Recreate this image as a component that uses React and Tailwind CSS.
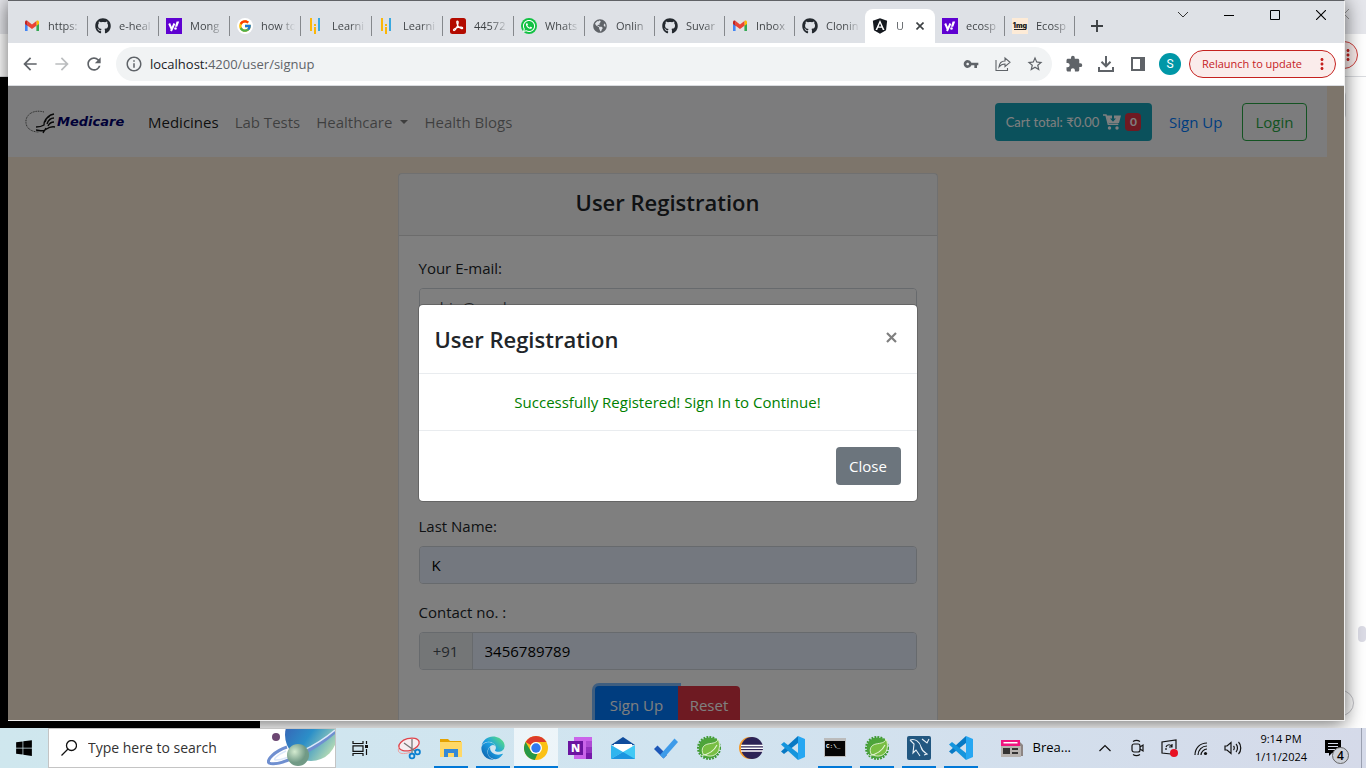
import React from 'react';
import { FaGithub, FaWhatsapp, FaAngular, FaWindows, FaEdge, FaGlobeAmericas } from 'react-icons/fa';
import { FcGoogle } from 'react-icons/fc';
import { MdVpnKey, MdStarBorder, MdExtension, MdArrowBack, MdArrowForward, MdRefresh, MdInfoOutline, MdMoreVert } from 'react-icons/md';

const UI = "font-['Open_Sans','Noto_Sans',sans-serif]";

function Gmail() {
  return (
    <svg className="size-4" viewBox="0 0 16 16">
      <path d="M1 4.5V13h2.6V7z" fill="#4285f4" />
      <path d="M15 4.5V13h-2.6V7z" fill="#34a853" />
      <path d="M12.4 3.6V8L15 6V4c0-1.400-1.500-2-2.600-1z" fill="#fbbc04" />
      <path d="M3.600 3L8 6.400 12.400 3v4.800L8 11 3.600 7.800z" fill="#ea4335" />
      <path d="M1 4v2l2.600 2V3C2.500 2 1 2.600 1 4z" fill="#c5221f" />
    </svg>
  );
}
function Yahoo() {
  return (
    <svg className="size-4" viewBox="0 0 16 16">
      <path d="M0 0h16v16H0z" fill="#5f01d1" />
      <path d="M3.200 5.500l2.200 5.200M8.400 5.500L5 13" stroke="#fff" strokeWidth="2" fill="none" />
      <path d="M10.600 3.500h2.600l-2 5.200H9z" fill="#fff" />
      <circle cx="9.500" cy="10.500" r="1.300" fill="#fff" />
    </svg>
  );
}
function Bars() {
  return (
    <svg className="size-4" viewBox="0 0 16 16">
      <path d="M2 0h2v13H2zM6 6h2v2H6zM6 9h2v7H6z" fill="#fbb709" />
      <path d="M10 0h2v13h-2z" fill="#38a8e0" />
    </svg>
  );
}
function Acrobat() {
  return (
    <svg className="size-4" viewBox="0 0 16 16">
      <rect width="16" height="16" rx="2.500" fill="#b30b00" />
      <path d="M7.300 3c1.500 0 .8 2.800 0 5-.8 2-2.300 4.800-3.500 4.500C2.600 12 5 9.800 8 9.300c2.200-.4 4.700-.2 4.700.8 0 1.200-2.600.3-4.200-1.400C7 7 6.200 3 7.300 3z" fill="none" stroke="#fff" strokeWidth="1.200" />
    </svg>
  );
}
function OneMg() {
  return (
    <svg className="size-4" viewBox="0 0 16 16">
      <path d="M0 0h16v16H0z" fill="#fdebd7" />
      <text x="8" y="9.500" textAnchor="middle" fontSize="7" fontWeight="900" fontFamily="Inter" fill="#222">1mg</text>
      <path d="M2 11.500h12" stroke="#222" />
    </svg>
  );
}
const github = <FaGithub className="size-4 text-[#24292f]" />;

const tabs = [
  ['https:', <Gmail />], ['e-heal', github], ['Mong', <Yahoo />],
  ['how to', <span className="flex size-4 items-center justify-center rounded-full bg-white"><FcGoogle className="size-3.5" /></span>],
  ['Learni', <Bars />], ['Learni', <Bars />], ['44572', <Acrobat />],
  ['Whats', <span className="flex size-4 items-center justify-center rounded-full bg-[#12c143] text-white"><FaWhatsapp className="size-3.5" /></span>],
  ['Onlin', <FaGlobeAmericas className="size-3.5 text-[#5f6368]" />],
  ['Suvar', github], ['Inbox', <Gmail />], ['Clonin', github],
  ['U', <FaAngular className="size-4 scale-110 text-[#15191f]" />],
  ['ecosp', <Yahoo />], ['Ecosp', <OneMg />],
];

function Tab({ label, icon, index }) {
  const active = index === 12;
  return (
    <div className={`relative flex h-[34px] shrink-0 items-center pl-[7px] ${index < 8 ? 'w-[71px]' : 'w-[70px]'} ${active ? 'rounded-t-lg bg-white' : ''}`}>
      <span className="flex size-4 shrink-0 items-center justify-center">{icon}</span>
      <button className={`ml-2 overflow-hidden bg-clip-text text-left text-[11px] leading-4 whitespace-nowrap text-transparent ${active ? 'w-4 bg-[#5a5e62] text-xs' : 'w-9 bg-linear-to-r from-[#3c4043] from-50% to-transparent to-95%'}`}>{label}</button>
      {active ? (
        <button aria-label="Close tab" className="flex size-4 items-center justify-center">
          <svg className="size-2" viewBox="0 0 8 8"><path d="M.5.5l7 7m0-7l-7 7" stroke="#3c4043" strokeWidth="1.600" /></svg>
        </button>
      ) : index !== 11 && <span className="absolute right-0 h-5 w-px bg-[#85888c]" />}
    </div>
  );
}

function TabStrip() {
  return (
    <div className="flex h-[42px] shrink-0 bg-[#dee1e6] pl-[9px]">
      <div className="flex flex-1 items-end overflow-hidden">
        {tabs.map(([label, icon], i) => <Tab key={i} label={label} icon={icon} index={i} />)}
        <button aria-label="New tab" className="flex h-[34px] w-11 shrink-0 items-center justify-center">
          <svg className="size-3" viewBox="0 0 12 12"><path d="M6 0v12M0 6h12" stroke="#3c4043" strokeWidth="1.900" /></svg>
        </button>
      </div>
      <div className="flex h-7 shrink-0">
        <button aria-label="Search tabs" className="flex w-[46px] items-center justify-center"><svg className="h-2 w-3" viewBox="0 0 12 8"><path d="M1 1l5 5 5-5" fill="none" stroke="#333" /></svg></button>
        <button aria-label="Minimize" className="flex w-[46px] items-center justify-center"><svg className="size-2.5" viewBox="0 0 10 10"><path d="M0 5.500h10" stroke="#000" /></svg></button>
        <button aria-label="Maximize" className="flex w-[46px] items-center justify-center"><svg className="size-2.5" viewBox="0 0 10 10"><path d="M.5.5h9v9h-9z" fill="none" stroke="#000" /></svg></button>
        <button aria-label="Close window" className="flex w-[46px] items-center justify-center"><svg className="size-2.5" viewBox="0 0 10 10"><path d="M0 0l10 10M10 0L0 10" stroke="#000" strokeWidth="1.100" /></svg></button>
      </div>
    </div>
  );
}

function Toolbar() {
  return (
    <div className="flex h-[43px] shrink-0 items-center border-b border-[#dadce0] bg-white pr-2 pl-3 text-[#5f6368]">
      <button aria-label="Back" className="w-8"><MdArrowBack className="size-5" /></button>
      <button aria-label="Forward" className="w-8 text-[#bbbdbf]"><MdArrowForward className="size-5" /></button>
      <button aria-label="Reload" className="w-8"><MdRefresh className="size-5" /></button>
      <div className="flex h-[34px] flex-1 items-center rounded-full bg-[#f1f3f4] pr-px pl-[9px]">
        <MdInfoOutline className="size-[18px]" />
        <a href="#signup" className="ml-[7px] flex-1 text-[13px] leading-5"><span className="text-[#202124]">localhost:</span>4200/user/signup</a>
        <button aria-label="Passwords" className="flex w-8 justify-center"><MdVpnKey className="size-4" /></button>
        <button aria-label="Share" className="flex w-8 justify-center">
          <svg className="size-4" viewBox="0 0 16 16" fill="none" stroke="currentColor" strokeWidth="1.100"><path d="M1 4v10.500h11.500V12" /><path d="M4 11c.4-4 2.600-6 6-6V2l5 4.300-5 4.200V8C7.300 8 5.500 9 4 11z" /></svg>
        </button>
        <button aria-label="Bookmark" className="flex w-8 justify-center"><MdStarBorder className="size-[18px]" /></button>
      </div>
      <div className="flex items-center pl-1.5">
        <button aria-label="Extensions" className="flex w-8 justify-center"><MdExtension className="size-[18px]" /></button>
        <button aria-label="Downloads" className="flex w-8 justify-center">
          <svg className="size-4" viewBox="0 0 16 16" fill="none" stroke="currentColor" strokeWidth="2"><path d="M8 0v10M3.500 5.800L8 10.300l4.500-4.500M1 11v4h14v-4" /></svg>
        </button>
        <button aria-label="Side panel" className="flex w-8 justify-center">
          <svg className="size-3.5" viewBox="0 0 14 14"><path d="M1 1h12v12H1z" fill="none" stroke="currentColor" strokeWidth="2" /><path d="M9 1h4v12H9z" fill="currentColor" /></svg>
        </button>
        <button className="mx-[5px] size-[22px] rounded-full bg-[#0097a7] font-[Roboto,sans-serif] text-xs text-white">S</button>
        <button className="ml-[3px] flex h-7 items-center rounded-full border border-[#c5221f] bg-[#faeceb] pr-1 pl-3 text-[11px] leading-4 whitespace-nowrap text-[#c5221f]">
          <span className="w-[111px] text-left">Relaunch to update</span><MdMoreVert className="size-[18px]" />
        </button>
      </div>
    </div>
  );
}

function Navbar() {
  return (
    <nav className="flex min-h-[71px] items-center bg-[#f8f9fa] pr-5 pl-[17px] text-[15px] leading-6 text-black/50">
      <a href="#home" className="mr-[23px] flex w-[100px] shrink-0 items-center">
        <svg className="h-6 w-8 shrink-0" viewBox="0 0 32 24" fill="none">
          <path d="M19 2C8-1 0 5 1 13c.5 5 5 9 13 9" stroke="#555" strokeDasharray="1 .7" />
          <path d="M29 4c-5 1-8 4-9 8M29 8c-4 0-6 3-7 6M29 12c-4 0-5 2-6 4M25 6c-4 2-6 5-6 9-3 2-5 2-8 2M30 17c-5-1-7 1-10 3-3 2-6 0-9 0M21 18l-3 5" stroke="#111" strokeWidth="1.400" />
        </svg>
        <span className="font-['DejaVu_Sans'] text-[13px] leading-5 font-bold text-[#00006e] italic">Medicare</span>
      </a>
      <div className="flex gap-4 whitespace-nowrap">
        <a href="#medicines" className="text-black/90">Medicines</a>
        <a href="#labs">Lab Tests</a>
        <a href="#healthcare" className="flex items-center gap-2">Healthcare<svg className="h-1 w-2" viewBox="0 0 8 4"><path d="M0 0h8L4 4z" fill="currentColor" /></svg></a>
        <a href="#blogs">Health Blogs</a>
      </div>
      <button className="ml-auto flex h-[38px] w-[157px] items-center justify-center gap-1 rounded bg-[#17a2b8] font-[Lato,sans-serif] text-[13px] whitespace-nowrap text-white">
        Cart total: ₹0.00
        <svg className="h-4 w-[18px]" viewBox="0 0 18 16"><path d="M0 1h3l2.300 9.300h10" fill="none" stroke="#fff" strokeWidth="1.500" /><path d="M3.500 1.500H9v3H7l3 3.200 3-3.200h-2v-3h7l-2 7.500H5.300z" fill="#fff" /><circle cx="6.500" cy="14" r="1.700" fill="#fff" /><circle cx="14" cy="14" r="1.700" fill="#fff" /></svg>
        <span className="flex h-[18px] w-4 items-center justify-center rounded bg-[#dc3545] text-xs font-bold">0</span>
      </button>
      <a href="#signup" className="ml-[17px] w-14 whitespace-nowrap text-[#007bff]">Sign Up</a>
      <button className="ml-[17px] h-[38px] w-[65px] rounded border border-[#28a745] text-[#28a745]">Login</button>
    </nav>
  );
}

function Field({ id, label, value, type = 'text', filled = true, prefix }) {
  return (
    <div className="mb-4">
      <label htmlFor={id} className="mb-2 block">{label}</label>
      <div className="flex h-[38px] overflow-hidden rounded border border-[#ced4da]">
        {prefix && <span className="flex w-[53px] items-center justify-center border-r border-[#ced4da] bg-[#e9ecef] text-[#495057]">{prefix}</span>}
        <input id={id} type={type} defaultValue={value} className={`min-w-0 flex-1 px-3 outline-none ${filled ? 'bg-[#e8f0fe] text-black' : 'bg-white text-[#495057]'}`} />
      </div>
    </div>
  );
}

function SignupForm() {
  return (
    <form className="mx-auto mt-4 w-[540px] rounded border border-black/12 bg-white text-[15px] leading-6 text-[#212529]">
      <h1 className="h-[62px] border-b border-black/12 bg-black/3 pt-2.5 text-center text-[22px] leading-9 font-semibold">User Registration</h1>
      <div className="p-5">
        <Field id="email" label="Your E-mail:" value="abin@gmd" filled={false} />
        <Field id="password" label="Password:" type="password" value="password" />
        <Field id="first" label="First Name:" value="Abin" />
        <Field id="last" label="Last Name:" value="K" />
        <Field id="contact" label="Contact no. :" value="3456789789" prefix="+91" />
        <div className="flex justify-center text-white">
          <button type="button" className="h-[38px] w-[83px] rounded-l bg-[#007bff] shadow-[0_0_0_3px_rgba(0,123,255,0.5)]">Sign Up</button>
          <button type="reset" className="h-[38px] w-[62px] rounded-r bg-[#dc3545]">Reset</button>
        </div>
      </div>
    </form>
  );
}

function Modal() {
  return (
    <div className="absolute inset-0 flex items-center justify-center bg-black/50 pr-[17px]">
      <section role="dialog" aria-label="User Registration" className="w-[498px] rounded bg-white text-[15px] leading-6 text-[#212529] ring-1 ring-black/20">
        <header className="flex items-start justify-between border-b border-[#e9ecef] p-4">
          <h2 className="text-[22px] leading-9 font-semibold">User Registration</h2>
          <button aria-label="Close" className="flex h-8 w-[18px] items-center justify-center">
            <svg className="size-[11px]" viewBox="0 0 11 11"><path d="M1 1l9 9M10 1l-9 9" stroke="#7f7f7f" strokeWidth="2.200" /></svg>
          </button>
        </header>
        <p className="border-b border-[#e9ecef] p-4 text-center text-[green]">Successfully Registered! Sign In to Continue!</p>
        <footer className="flex justify-end p-4"><button className="h-[38px] w-[65px] rounded bg-[#6c757d] text-white">Close</button></footer>
      </section>
    </div>
  );
}

function BackWindow() {
  return (
    <div className="absolute inset-0 flex flex-col overflow-hidden bg-white">
      <div className="flex h-[34px] shrink-0 items-start justify-end bg-[#e6e7ec] pt-2">
        <svg className="mr-4 h-3 w-2" viewBox="0 0 8 12"><path d="M7 1L2 6l5 5" fill="none" stroke="#999" /></svg>
      </div>
      <div className="flex h-[43px] shrink-0 items-center justify-end border-b border-[#dadce0] pr-2">
        <span className="flex h-7 w-40 items-center justify-end rounded-full border border-[#d0403d] bg-[#faeceb] text-[#c5221f]"><MdMoreVert className="size-[18px]" /></span>
      </div>
      <div className="flex flex-1">
        <div className="w-[260px] bg-black" />
        <div className="flex flex-1 flex-col items-end">
          <span className="mt-3.5 mr-5 h-7 w-10 rounded border border-[#dadce0]" />
          <span className="mt-auto mb-12 h-4 w-2 rounded-full bg-[#dcdce6]" />
          <span className="mr-3 mb-3 size-[26px] rounded-full border border-[#c5c5ca]" />
        </div>
      </div>
    </div>
  );
}

function TaskView() {
  return <svg className="size-[18px]" viewBox="0 0 18 18" fill="none" stroke="#111" strokeWidth="1.200"><path d="M2 2v2.500h10V2M2 6.800h10v5.500H2zM2 17v-2.500h10V17M15.500 2v3M15.500 10v6" /><path d="M14 6h3v3h-3z" fill="#111" stroke="none" /></svg>;
}
function Snip() {
  return <svg className="size-6" viewBox="0 0 24 24" fill="none"><ellipse cx="12" cy="8.500" rx="10.500" ry="6" transform="rotate(-16 12 8.500)" fill="#f6eef0" stroke="#e0444b" strokeWidth="1.300" /><path d="M2 11c-3 7 4 8 12 5" stroke="#f0a0a0" /><path d="M7 7l11 8M15 3l0 14" stroke="#777" strokeWidth="1.300" /><circle cx="15" cy="20" r="2.400" stroke="#0a7fd0" strokeWidth="1.800" /><circle cx="20.500" cy="16" r="2.400" stroke="#0a7fd0" strokeWidth="1.800" /></svg>;
}
function Explorer() {
  return <svg className="size-6" viewBox="0 0 24 24"><path d="M1 3h8l2 2h11v5H1z" fill="#e4a200" /><path d="M1 6h22v15H1z" fill="#ffd866" /><path d="M5 13h14v8h-4v-4H9v4H5z" fill="#3489d6" /></svg>;
}
function Edge() {
  return (
    <span className="flex size-6">
      <svg className="size-0" aria-hidden="true"><defs><linearGradient id="edge" x1="0" y1="1" x2="1" y2="0"><stop offset="0" stopColor="#0c59a4" /><stop offset=".5" stopColor="#1b9de2" /><stop offset="1" stopColor="#66eb6e" /></linearGradient></defs></svg>
      <FaEdge className="size-6" style={{ fill: 'url(#edge)' }} />
    </span>
  );
}
function Chrome() {
  return <svg className="size-6" viewBox="0 0 24 24"><circle cx="12" cy="12" r="12" fill="#fbc116" /><path d="M12 0a12 12 0 0 1 10.400 6H12a6 6 0 0 0-5.200 3L1.600 6A12 12 0 0 1 12 0z" fill="#dd3b2c" /><path d="M1.600 6l5.200 9A6 6 0 0 0 13.500 17.800L10.800 24A12 12 0 0 1 1.600 6z" fill="#279847" /><circle cx="12" cy="12" r="6" fill="#fff" /><circle cx="12" cy="12" r="4.700" fill="#3079ee" /></svg>;
}
function OneNote() {
  return <svg className="size-6" viewBox="0 0 24 24"><path d="M6 1h18v22H6z" fill="#ca64ea" /><path d="M18 5h6v6h-6z" fill="#ae4bd5" /><path d="M18 11h6v6h-6z" fill="#9332bf" /><path d="M18 17h6v6h-6z" fill="#7719aa" /><path d="M0 5h15v14H0z" fill="#6b14a0" /><text x="7.500" y="16" textAnchor="middle" fontFamily="Open Sans" fontWeight="800" fontSize="11" fill="#fff">N</text></svg>;
}
function Mail() {
  return <svg className="size-6" viewBox="0 0 24 24"><path d="M0 9l12-8 12 8z" fill="#0f4c9c" /><path d="M3 8h18v8H3z" fill="#fff" /><path d="M0 9v14L12 16z" fill="#2fb5ee" /><path d="M24 9v14H0z" fill="#41c9f5" /><path d="M24 23L12 16 0 23z" fill="#1b95e0" /></svg>;
}
function Todo() {
  return <svg className="size-6" viewBox="0 0 24 24"><path d="M0 13l3.500-3.500L13 19l-3.500 3.500z" fill="#1d57b7" /><path d="M9.500 22.500L6 19 20.500 2.500 24 6z" fill="#3d9be9" /></svg>;
}
function Spring() {
  return (
    <svg className="size-6" viewBox="0 0 24 24">
      <circle cx="12" cy="12" r="10.800" fill="none" stroke="#3f9a33" strokeWidth="2.400" strokeDasharray="1.800 1.200" />
      <circle cx="12" cy="12" r="10.300" fill="#2f8a35" />
      <path d="M12 1.700A10.300 10.300 0 1 0 22.300 12C22 9 21.500 6 20.500 4L17 2z" fill="#4da43a" />
      <path d="M21 3c-1 4-5 4-10 5-5 1-7 5-5 10 5 3 11 3 15-2 2-4 2-9 0-13z" fill="#78be43" stroke="#e4f4d4" strokeWidth=".9" />
      <path d="M4.500 19.500C11 18.500 17 15 20 9" fill="none" stroke="#e4f4d4" strokeWidth="1.100" />
    </svg>
  );
}
function Eclipse() {
  return <svg className="size-6" viewBox="0 0 24 24"><circle cx="11" cy="12" r="11" fill="#f59a29" /><circle cx="13" cy="12" r="11" fill="#2c2255" /><path d="M2 9.500h22M2 12.300h22M2 15h22" stroke="#fff" strokeWidth="1.400" /></svg>;
}
function Code() {
  return <svg className="size-6" viewBox="0 0 24 24"><path d="M17 0l7 3v18l-7 3z" fill="#27a7f2" /><path d="M17 0v7L3 18l-3-2.500z" fill="#0879c4" /><path d="M17 24v-7L3 6 0 8.500z" fill="#1595dd" /></svg>;
}
function Terminal() {
  return <svg className="size-6" viewBox="0 0 24 24"><path d="M1 2h22v19H1z" fill="#bbb" /><path d="M2 5h20v15H2z" fill="#050505" /><text x="3" y="11.500" fontFamily="Liberation Mono" fontWeight="700" fontSize="6" fill="#fff">C:\_</text></svg>;
}
function Workbench() {
  return <svg className="size-6" viewBox="0 0 24 24"><rect width="24" height="24" rx="2" fill="#225780" /><path d="M3 4c5-2 10 2 11 7 1 4 3 5 6 7l-3 1M3 4l4 4-1 9 3-3 4 6M15 3l5 4 2-4" fill="none" stroke="#e8f0f6" strokeWidth="1.100" /></svg>;
}

const apps = [
  [Snip, 'Snipping Tool', false], [Explorer, 'File Explorer', true], [Edge, 'Edge', true], [Chrome, 'Chrome', true],
  [OneNote, 'OneNote', false], [Mail, 'Mail', false], [Todo, 'To Do', false], [Spring, 'Spring Tools', false],
  [Eclipse, 'Eclipse', false], [Code, 'VS Code', false], [Terminal, 'Command Prompt', true], [Spring, 'Spring Tools 4', true],
  [Workbench, 'MySQL Workbench', true], [Code, 'VS Code window', true],
];

function Planets() {
  return (
    <svg className="h-full w-[68px]" viewBox="0 0 68 38">
      <defs>
        <linearGradient id="planet" x1="0" y1="0" x2="1" y2=".7"><stop stopColor="#3b55b0" /><stop offset=".55" stopColor="#2b8fc8" /><stop offset="1" stopColor="#b7dcb4" /></linearGradient>
        <radialGradient id="moon" cx=".35" cy=".35"><stop stopColor="#d4ebd0" /><stop offset="1" stopColor="#719a86" /></radialGradient>
      </defs>
      <circle cx="44" cy="6" r="26" fill="url(#planet)" />
      <path d="M20 18C8 22-1 31 2 34c8 4 42-10 66-31" fill="none" stroke="#6f8fd0" strokeWidth="3" />
      <path d="M19 22C10 26 5 31 9 31c9 0 39-13 59-30" fill="none" stroke="#dce8fa" strokeWidth="1.500" />
      <circle cx="31" cy="26" r="11" fill="url(#moon)" /><circle cx="9" cy="8" r="4" fill="#6c4772" />
    </svg>
  );
}

function TrayIcon({ label, children }) {
  return <button aria-label={label} className="flex w-8 items-center justify-center"><svg className="size-[18px]" viewBox="0 0 18 18" fill="none" stroke="#111" strokeWidth="1.200">{children}</svg></button>;
}

function Taskbar() {
  return (
    <footer className="relative flex h-10 shrink-0 bg-linear-to-r from-[#cfe7ee] via-[#d1e4f0] to-[#d5dae9] text-black">
      <button aria-label="Start" className="flex w-12 items-center justify-center"><FaWindows className="size-[18px]" /></button>
      <label className="flex w-72 items-center border border-[#c4c4c4] bg-white pl-3">
        <svg className="size-4" viewBox="0 0 16 16" fill="none" stroke="#111" strokeWidth="1.300"><circle cx="10.500" cy="5.500" r="5" /><path d="M7 9l-6.500 6.500" /></svg>
        <input aria-label="Search" placeholder="Type here to search" className="ml-[11px] min-w-0 flex-1 text-sm outline-none placeholder:text-[#333]" />
        <Planets />
      </label>
      <button aria-label="Task View" className="mr-1 flex w-12 items-center justify-center"><TaskView /></button>
      {apps.map(([Icon, name, open], i) => (
        <button key={name} aria-label={name} className={`relative flex shrink-0 items-center justify-center ${i === 3 ? 'w-11 bg-white/60' : i > 3 && i < 8 ? 'w-[43px]' : 'w-[42px]'}`}>
          <Icon />
          {open && <span className={`absolute bottom-0 h-0.5 bg-[#0078d7] ${i === 3 ? 'inset-x-0' : 'inset-x-1'}`} />}
        </button>
      ))}
      <div className="ml-auto flex">
        <button className="mr-[18px] flex items-center gap-2.5 text-[13px]">
          <svg className="h-[18px] w-[22px]" viewBox="0 0 22 18"><path d="M0 1h19v6H0z" fill="#f0147e" /><path d="M2.500 3h14v1.500h-14z" fill="#fff" /><path d="M19 3l3 3v11h-3z" fill="#8d8583" /><path d="M0 7h20v11H0z" fill="#b7b3b0" /><path d="M2 9h7v6H2zM11 9h6v2h-6zM11 13h6v2h-6z" fill="#333" /></svg>
          Brea...
        </button>
        <TrayIcon label="Show hidden icons"><path d="M3.500 12L9 6.500l5.500 5.500" /></TrayIcon>
        <TrayIcon label="Meet now"><rect x="4" y="5" width="8" height="8" rx="2" /><path d="M12 8l3-2v6l-3-2M5 2.500c2-1.300 5-1.300 7 0M5 15.500c2 1.300 5 1.300 7 0" /></TrayIcon>
        <TrayIcon label="Update"><path d="M11 15l-9-1V3l14-2v9M6 8c1-3 5-3 6 0M12 5v3H9M6 11V9" /><circle cx="14" cy="14" r="4" fill="#e81123" stroke="none" /></TrayIcon>
        <TrayIcon label="Network"><path d="M3 16C3 9 8 4 15 4M6 16c0-5 4-9 9-9M9 16c0-3 3-6 6-6" /><circle cx="13.500" cy="14.500" r="1.600" fill="#111" stroke="none" /></TrayIcon>
        <TrayIcon label="Volume"><path d="M1 7v4h2l4 3.500v-11L3 7zM9.500 7c1 1 1 3 0 4M12 5c2 2 2 6 0 8M14.500 3c3 3 3 9 0 12" /></TrayIcon>
        <time className="ml-1 flex w-14 flex-col justify-center text-center text-[11px] leading-[18px] whitespace-nowrap"><span>9:14 PM</span><span>1/11/2024</span></time>
        <button aria-label="Notifications" className="relative flex w-[52px] items-center justify-center pr-1">
          <svg className="size-4" viewBox="0 0 16 16"><path d="M0 0h16v13H7l-3 3v-3H0z" fill="#000" /><path d="M3 3.500h10M3 6.500h10M3 9.500h7" stroke="#d5dae9" /></svg>
          <span className="absolute right-3 bottom-1 flex size-[17px] items-center justify-center rounded-full border border-[#666] bg-[#ccd0d8] text-xs leading-none font-semibold">4</span>
        </button>
        <span className="w-[5px] border-l border-[#9aa0b0]" />
      </div>
    </footer>
  );
}

export default function App() {
  return (
    <div className={`flex h-screen flex-col overflow-hidden ${UI}`}>
      <div className="relative flex min-h-0 flex-1 overflow-hidden pr-[21px] pb-[7px]">
        <BackWindow />
        <main className="relative ml-2 flex min-w-0 flex-1 flex-col border-t border-r border-b border-t-[#606266] border-r-[#f0f0f0] border-b-[#f0f0f0] shadow-[0_2px_18px_rgba(0,0,0,0.6)]">
          <TabStrip />
          <Toolbar />
          <div className="relative min-h-0 flex-1 overflow-hidden bg-[#faebd7]">
            <div className="mr-[17px]"><Navbar /><SignupForm /></div>
            <Modal />
          </div>
        </main>
      </div>
      <Taskbar />
    </div>
  );
}
